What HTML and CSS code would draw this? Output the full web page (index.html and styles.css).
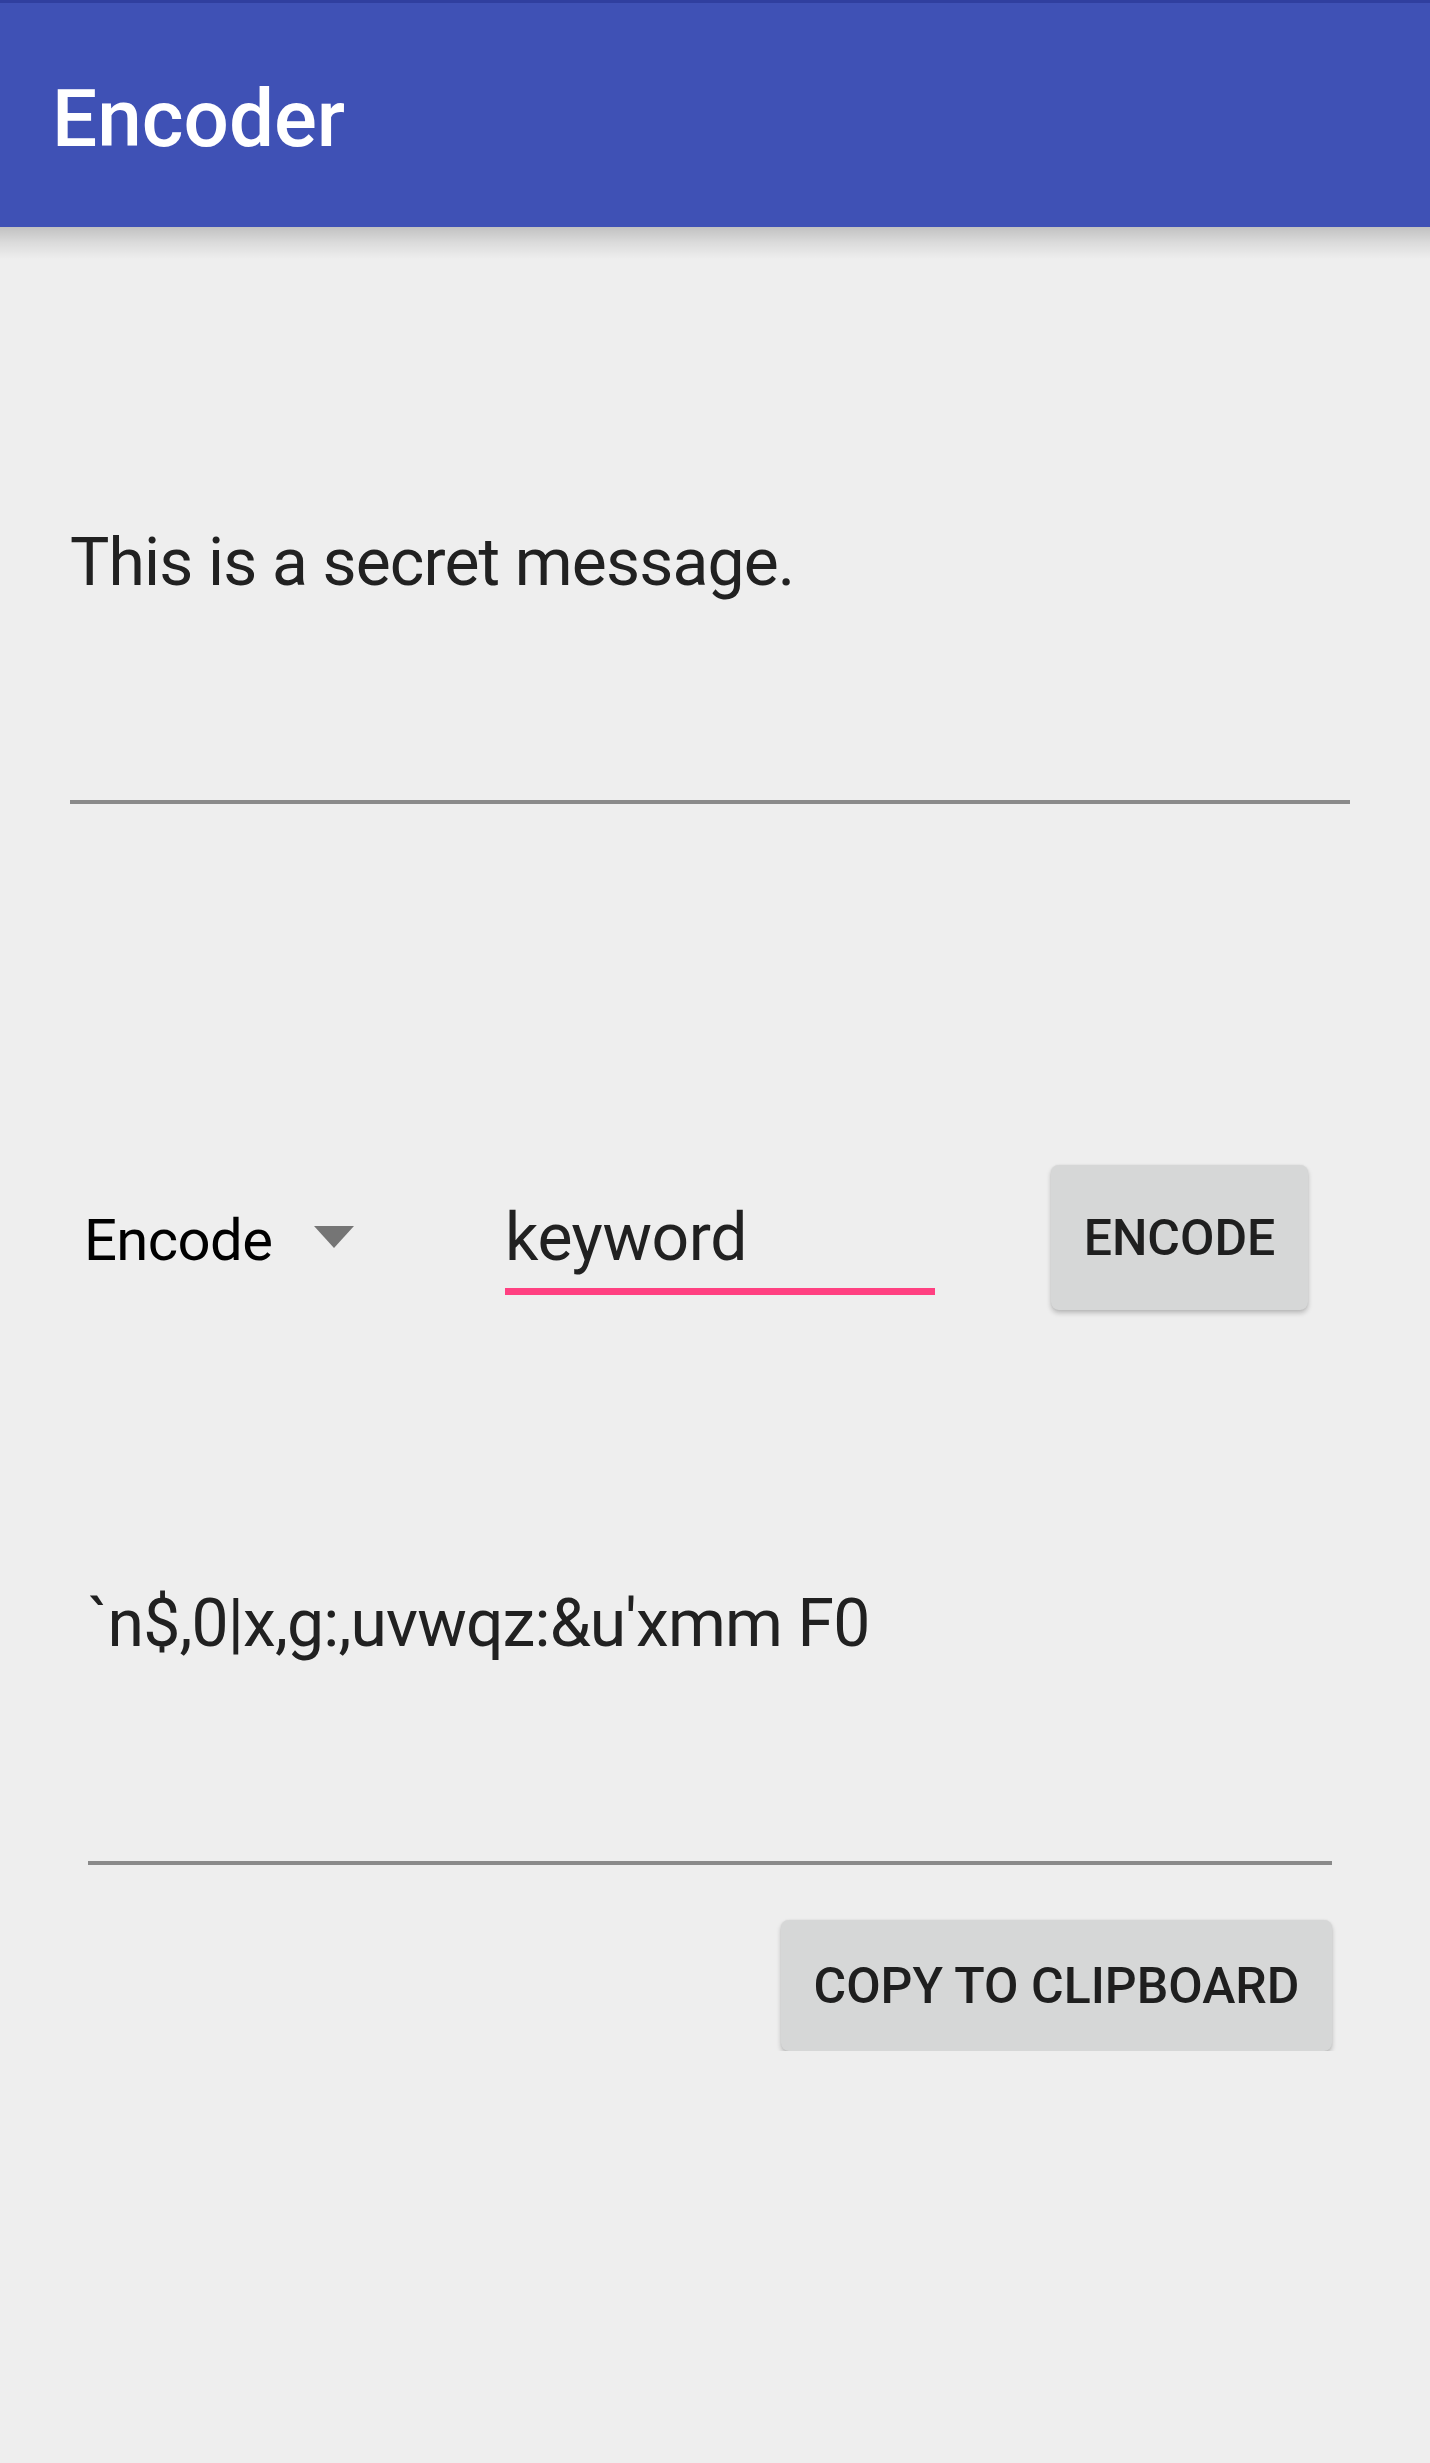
FILE: index.html
```html
<!DOCTYPE html>
<html>
<head>
<meta charset="utf-8">
<link rel="stylesheet" href="styles.css">
</head>
<body>
<div class="statusbar"></div>
<header class="appbar"><h1 class="title">Encoder</h1></header>
<main class="content">
  <div class="field message">
    <div class="field-text">This is a secret message.</div>
    <div class="field-line"></div>
  </div>
  <div class="controls">
    <div class="spinner">
      <span class="spinner-text">Encode</span>
      <svg class="spinner-arrow" width="40" height="22" viewBox="0 0 40 22"><polygon points="0,0 40,0 20,22" fill="#757575"/></svg>
    </div>
    <div class="keyword">
      <div class="keyword-text">keyword</div>
      <div class="keyword-line"></div>
    </div>
    <button class="btn btn-encode">ENCODE</button>
  </div>
  <div class="field output">
    <div class="field-text">`n$,0|x,g:,uvwqz:&amp;u'xmm F0</div>
    <div class="field-line"></div>
  </div>
  <div class="copy-row">
    <button class="btn btn-copy">COPY TO CLIPBOARD</button>
  </div>
</main>
</body>
</html>
```
FILE: styles.css
```css
html, body {
  margin: 0;
  padding: 0;
  background: #eeeeee;
  font-family: Roboto, "Noto Sans", "Liberation Sans", sans-serif;
}
.statusbar {
  height: 3px;
  background: #303f9f;
}
.appbar {
  position: relative;
  height: 224px;
  background: #3f51b5;
  display: flex;
  align-items: flex-start;
}
.appbar::after {
  content: "";
  position: absolute;
  left: 0;
  right: 0;
  top: 224px;
  height: 32px;
  background: linear-gradient(to bottom, rgba(0,0,0,0.19), rgba(0,0,0,0.08) 50%, rgba(0,0,0,0));
}
.title {
  margin: 0;
  padding: 68px 0 0 52px;
  color: #ffffff;
  font-size: 80px;
  font-weight: 500;
  line-height: 96px;
}
.content {
  display: flex;
  flex-direction: column;
}
.field-text {
  font-size: 66px;
  line-height: 80px;
  letter-spacing: -0.85px;
  color: #212121;
  white-space: nowrap;
}
.field-line {
  height: 4px;
  background: #8a8a8a;
}
.message {
  margin: 296px 0 0 70px;
  width: 1280px;
}
.message .field-line {
  margin-top: 197px;
}
.controls {
  margin-top: 361px;
  height: 145px;
  display: flex;
  align-items: flex-start;
  padding-left: 84px;
}
.spinner {
  width: 270px;
  margin-top: 40px;
  display: flex;
  align-items: flex-start;
  justify-content: space-between;
}
.spinner-text {
  font-size: 58px;
  line-height: 70px;
  letter-spacing: -0.6px;
  color: #000000;
}
.spinner-arrow {
  margin-top: 21px;
  display: block;
}
.keyword {
  width: 430px;
  margin-left: 151px;
  margin-top: 33px;
}
.keyword-text {
  font-size: 66px;
  line-height: 80px;
  letter-spacing: -0.4px;
  color: #212121;
}
.keyword-line {
  margin-top: 10px;
  height: 7px;
  background: #ff4081;
}
.btn {
  border: none;
  border-radius: 8px;
  background: #d6d7d7;
  box-shadow: 0 3px 5px rgba(0,0,0,0.22), 0 0 2px rgba(0,0,0,0.08);
  font-family: Roboto, "Noto Sans", "Liberation Sans", sans-serif;
  font-size: 50px;
  font-weight: 500;
  color: #1f1f1f;
  padding: 0;
  display: flex;
  align-items: center;
  justify-content: center;
}
.btn-encode {
  width: 257px;
  height: 145px;
  margin-left: 116px;
}
.output {
  margin: 274px 0 0 88px;
  width: 1244px;
}
.output .field-line {
  margin-top: 197px;
}
.copy-row {
  display: flex;
  justify-content: flex-end;
  padding-right: 98px;
  margin-top: 55px;
}
.btn-copy {
  width: 551px;
  height: 131px;
}
```
